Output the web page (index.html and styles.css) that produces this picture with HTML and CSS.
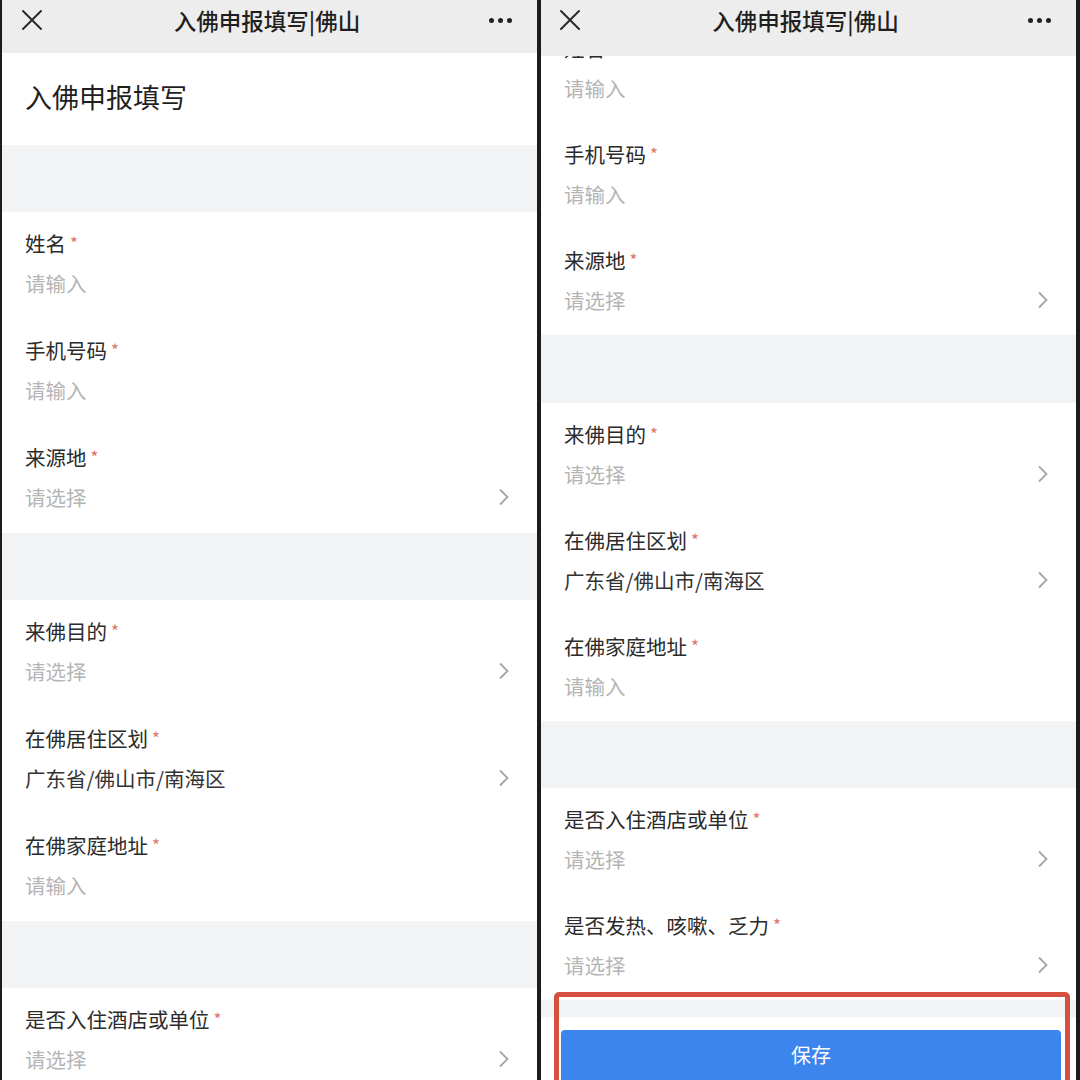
FILE: index.html
```html
<!DOCTYPE html>
<html lang="zh-CN">
<head>
<meta charset="utf-8">
<title>入佛申报填写|佛山</title>
<link rel="stylesheet" href="styles.css">
</head>
<body>
<div class="screen">
  <section class="phone phone-left">
    <header class="navbar navbar-left">
      <svg class="nav-close" width="22" height="22" viewBox="0 0 22 22"><path d="M2 2 L20 20 M20 2 L2 20" stroke="#2a2a2a" stroke-width="2" fill="none" stroke-linecap="round"/></svg>
      <div class="nav-title">入佛申报填写|佛山</div>
      <div class="nav-more"><i></i><i></i><i></i></div>
    </header>
    <div class="page-title">入佛申报填写</div>
    <div class="gap"></div>
    <div class="group">
      <div class="field"><div class="label">姓名<span class="req">*</span></div><div class="value ph">请输入</div></div>
      <div class="field"><div class="label">手机号码<span class="req">*</span></div><div class="value ph">请输入</div></div>
      <div class="field"><div class="label">来源地<span class="req">*</span></div><div class="value ph">请选择<svg class="chev" width="12" height="18" viewBox="0 0 12 18"><path d="M2 1.5 L9.5 9 L2 16.5" stroke="#a6a6a6" stroke-width="1.8" fill="none"/></svg></div></div>
    </div>
    <div class="gap"></div>
    <div class="group">
      <div class="field"><div class="label">来佛目的<span class="req">*</span></div><div class="value ph">请选择<svg class="chev" width="12" height="18" viewBox="0 0 12 18"><path d="M2 1.5 L9.5 9 L2 16.5" stroke="#a6a6a6" stroke-width="1.8" fill="none"/></svg></div></div>
      <div class="field"><div class="label">在佛居住区划<span class="req">*</span></div><div class="value">广东省/佛山市/南海区<svg class="chev" width="12" height="18" viewBox="0 0 12 18"><path d="M2 1.5 L9.5 9 L2 16.5" stroke="#a6a6a6" stroke-width="1.8" fill="none"/></svg></div></div>
      <div class="field"><div class="label">在佛家庭地址<span class="req">*</span></div><div class="value ph">请输入</div></div>
    </div>
    <div class="gap"></div>
    <div class="group">
      <div class="field"><div class="label">是否入住酒店或单位<span class="req">*</span></div><div class="value ph">请选择<svg class="chev" width="12" height="18" viewBox="0 0 12 18"><path d="M2 1.5 L9.5 9 L2 16.5" stroke="#a6a6a6" stroke-width="1.8" fill="none"/></svg></div></div>
    </div>
  </section>

  <section class="phone phone-right">
    <header class="navbar navbar-right">
      <svg class="nav-close" width="22" height="22" viewBox="0 0 22 22"><path d="M2 2 L20 20 M20 2 L2 20" stroke="#2a2a2a" stroke-width="2" fill="none" stroke-linecap="round"/></svg>
      <div class="nav-title">入佛申报填写|佛山</div>
      <div class="nav-more"><i></i><i></i><i></i></div>
    </header>
    <div class="viewport">
      <div class="scroll">
        <div class="group">
          <div class="field"><div class="label">姓名<span class="req">*</span></div><div class="value ph">请输入</div></div>
          <div class="field"><div class="label">手机号码<span class="req">*</span></div><div class="value ph">请输入</div></div>
          <div class="field"><div class="label">来源地<span class="req">*</span></div><div class="value ph">请选择<svg class="chev" width="12" height="18" viewBox="0 0 12 18"><path d="M2 1.5 L9.5 9 L2 16.5" stroke="#a6a6a6" stroke-width="1.8" fill="none"/></svg></div></div>
        </div>
        <div class="gap gap-r1"></div>
        <div class="group">
          <div class="field"><div class="label">来佛目的<span class="req">*</span></div><div class="value ph">请选择<svg class="chev" width="12" height="18" viewBox="0 0 12 18"><path d="M2 1.5 L9.5 9 L2 16.5" stroke="#a6a6a6" stroke-width="1.8" fill="none"/></svg></div></div>
          <div class="field"><div class="label">在佛居住区划<span class="req">*</span></div><div class="value">广东省/佛山市/南海区<svg class="chev" width="12" height="18" viewBox="0 0 12 18"><path d="M2 1.5 L9.5 9 L2 16.5" stroke="#a6a6a6" stroke-width="1.8" fill="none"/></svg></div></div>
          <div class="field"><div class="label">在佛家庭地址<span class="req">*</span></div><div class="value ph">请输入</div></div>
        </div>
        <div class="gap"></div>
        <div class="group">
          <div class="field"><div class="label">是否入住酒店或单位<span class="req">*</span></div><div class="value ph">请选择<svg class="chev" width="12" height="18" viewBox="0 0 12 18"><path d="M2 1.5 L9.5 9 L2 16.5" stroke="#a6a6a6" stroke-width="1.8" fill="none"/></svg></div></div>
          <div class="field"><div class="label">是否发热、咳嗽、乏力<span class="req">*</span></div><div class="value ph">请选择<svg class="chev" width="12" height="18" viewBox="0 0 12 18"><path d="M2 1.5 L9.5 9 L2 16.5" stroke="#a6a6a6" stroke-width="1.8" fill="none"/></svg></div></div>
        </div>
        <div class="footer-gap"></div>
        <div class="footer">
          <div class="save-btn">保存</div>
        </div>
      </div>
    </div>
    <div class="highlight"></div>
  </section>
</div>
</body>
</html>
```

FILE: styles.css
```css
* { box-sizing: border-box; }
html, body {
  margin: 0;
  padding: 0;
  width: 1080px;
  height: 1080px;
  overflow: hidden;
  background: #1c1c1c;
  font-family: "Noto Sans CJK SC", "Noto Sans", sans-serif;
}
.screen {
  display: flex;
  height: 1080px;
  padding-left: 2px;
  gap: 4px;
}
.phone {
  width: 535px;
  height: 1080px;
  background: #fff;
  display: flex;
  flex-direction: column;
  overflow: hidden;
  position: relative;
  --row: 107px;
}
.phone > * { flex-shrink: 0; }
.phone-right { --row: 106px; }

.navbar {
  background: #ededed;
  display: flex;
  align-items: flex-start;
  padding: 0 25px 0 19px;
}
.navbar-left { height: 53px; }
.navbar-right { height: 56px; padding-left: 18px; }
.nav-close { margin-top: 9px; flex: none; }
.nav-title {
  flex: 1;
  text-align: center;
  font-size: 22.5px;
  line-height: 40px;
  color: #1f1f1f;
  font-weight: 500;
  padding-left: 2px;
}
.nav-more {
  display: flex;
  gap: 4px;
  margin-top: 18px;
  flex: none;
}
.nav-more i {
  display: block;
  width: 5px;
  height: 5px;
  border-radius: 50%;
  background: #222;
}

.page-title {
  height: 92px;
  display: flex;
  align-items: center;
  padding-left: 23px;
  padding-bottom: 6px;
  font-size: 27px;
  color: #1f1f1f;
}
.gap {
  height: 67px;
  background: #f2f3f5;
}
.gap-r1 { height: 68px; }

.group { background: #fff; }
.field {
  height: var(--row);
  padding: 20px 27px 0 23px;
}
.label {
  font-size: 20.5px;
  line-height: 22px;
  height: 22px;
  color: #2b2b2b;
  white-space: nowrap;
}
.req {
  color: #e0766c;
  font-size: 17px;
  margin-left: 4px;
  position: relative;
  top: -2px;
}
.value {
  margin-top: 18px;
  font-size: 20.5px;
  line-height: 22px;
  height: 22px;
  color: #333;
  display: flex;
  justify-content: space-between;
  align-items: center;
}
.value.ph { color: #b5b5b5; }
.chev { flex: none; }

.viewport {
  flex: 1 1 0;
  overflow: hidden;
}
.scroll { margin-top: -39px; }

.footer-gap {
  height: 17px;
  background: #f2f3f5;
}
.footer {
  background: #fff;
  padding: 13px 15px 0 20px;
}
.save-btn {
  height: 56px;
  background: #3c85ec;
  border-radius: 4px 4px 0 0;
  color: #fff;
  font-size: 20px;
  text-align: center;
  line-height: 50px;
}

.highlight {
  position: absolute;
  left: 13px;
  right: 6px;
  top: 992px;
  height: 110px;
  border: 5px solid #d5503f;
  border-radius: 5px;
  pointer-events: none;
}
```
